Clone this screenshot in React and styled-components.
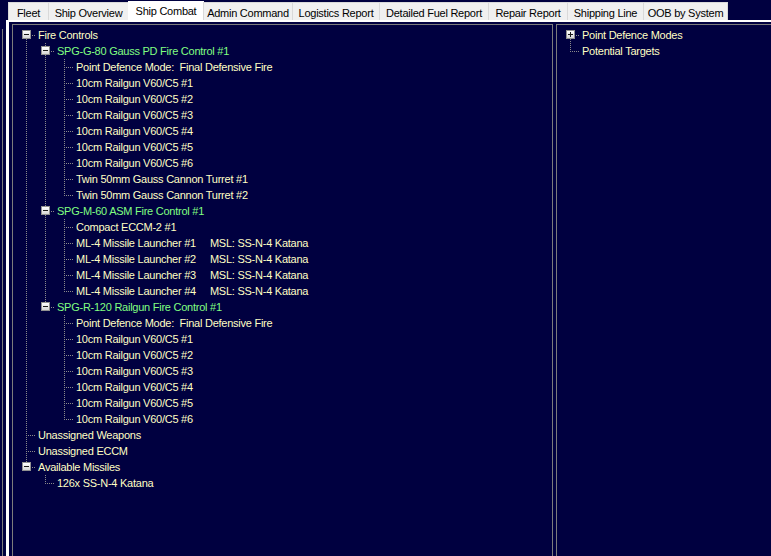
import React from "react";
import styled, { createGlobalStyle } from "styled-components";

const NAVY = "#000040";
const LINE = "#8a8a8a";
const FONT = `"Liberation Sans", Arial, sans-serif`;

const Global = createGlobalStyle`
  html, body {
    margin: 0;
    padding: 0;
    background: ${NAVY};
    overflow: hidden;
  }
  * { box-sizing: border-box; }
`;

const Screen = styled.div`
  display: flex;
  width: 771px;
  height: 566px;
  background: ${NAVY};
  font-family: ${FONT};
  font-size: 11px;
  letter-spacing: -0.25px;
`;

const Gutter = styled.div`
  width: 4px;
  margin-left: 2px;
  margin-top: 29px;
  border-left: 1px solid #7c7c7c;
`;

const Main = styled.div`
  flex: 1;
  display: flex;
  flex-direction: column;
  min-width: 0;
`;

const TabStrip = styled.div`
  display: flex;
  align-items: flex-end;
  height: 20px;
  padding-left: 3px;
`;

const Tab = styled.div`
  flex: none;
  width: ${(p) => p.$w}px;
  height: ${(p) => (p.$active ? 19 : 18)}px;
  padding-top: ${(p) => (p.$active ? 2 : 3)}px;
  line-height: 14px;
  text-align: center;
  white-space: nowrap;
  color: #000;
  background: ${(p) => (p.$active ? "#ffffff" : "#f0f0f0")};
  border: 1px solid ${(p) => (p.$active ? "#ffffff" : "#d9d9d9")};
  border-bottom: none;
  margin-left: -1px;
`;

const TabPage = styled.div`
  flex: 1;
  display: flex;
  gap: 3px;
  padding: 2px 0 0 3px;
  border-top: 2px solid #ffffff;
  border-left: 3px solid #ffffff;
  background: ${NAVY};
  min-height: 0;
`;

const Panel = styled.div`
  flex: ${(p) => (p.$w ? "none" : "1")};
  width: ${(p) => (p.$w ? `${p.$w}px` : "auto")};
  margin-right: ${(p) => (p.$w ? 0 : -10)}px;
  border: 1px solid #7c7c7c;
  padding: 2px 0 0 4px;
  overflow: hidden;
`;

const Row = styled.div`
  display: flex;
  align-items: flex-start;
  height: 16px;
`;

const dotsV = `repeating-linear-gradient(to bottom, ${LINE} 0 1px, transparent 1px 2px)`;
const dotsH = `repeating-linear-gradient(to right, ${LINE} 0 1px, transparent 1px 2px)`;

const Guide = styled.div`
  flex: none;
  width: 19px;
  height: 16px;
  background: ${(p) => (p.$line ? `${dotsV} 9px 0 / 1px 16px no-repeat` : "none")};
`;

const vSeg = {
  full: `, ${dotsV} 9px 0 / 1px 16px no-repeat`,
  top: `, ${dotsV} 9px 0 / 1px 8px no-repeat`,
  bottom: `, ${dotsV} 9px 8px / 1px 8px no-repeat`,
  none: "",
};

const Connector = styled.div`
  flex: none;
  width: 19px;
  height: 16px;
  padding: 3px 0 0 5px;
  background: ${dotsH} 9px 8px / 10px 1px no-repeat ${(p) => vSeg[p.$v]};
`;

const Expander = styled.div`
  width: 9px;
  height: 9px;
  border: 1px solid #919191;
  background: ${(p) =>
      p.$open
        ? ""
        : "linear-gradient(#1a1a1a, #1a1a1a) center / 1px 5px no-repeat, "}
    linear-gradient(#1a1a1a, #1a1a1a) center / 5px 1px no-repeat,
    linear-gradient(#ffffff, #d6d6d6);
`;

const Label = styled.div`
  padding-left: 2px;
  line-height: 16px;
  white-space: pre;
  color: ${(p) => (p.$green ? "#80ff80" : "#ffffc4")};
`;

const Extra = styled.span`
  margin-left: 14px;
`;

const tabs = [
  ["Fleet", 41],
  ["Ship Overview", 81],
  ["Ship Combat", 76, true],
  ["Admin Command", 90],
  ["Logistics Report", 88],
  ["Detailed Fuel Report", 110],
  ["Repair Report", 80],
  ["Shipping Line", 77],
  ["OOB by System", 85],
];

const railguns = [1, 2, 3, 4, 5, 6].map((n) => ({ text: `10cm Railgun V60/C5 #${n}` }));
const pdMode = { text: "Point Defence Mode:  Final Defensive Fire" };
const launchers = [1, 2, 3, 4].map((n) => ({
  text: `ML-4 Missile Launcher #${n}`,
  extra: "MSL: SS-N-4 Katana",
}));

const leftTree = [
  {
    text: "Fire Controls",
    open: true,
    children: [
      {
        text: "SPG-G-80 Gauss PD Fire Control #1",
        green: true,
        open: true,
        children: [
          pdMode,
          ...railguns,
          { text: "Twin 50mm Gauss Cannon Turret #1" },
          { text: "Twin 50mm Gauss Cannon Turret #2" },
        ],
      },
      {
        text: "SPG-M-60 ASM Fire Control #1",
        green: true,
        open: true,
        children: [{ text: "Compact ECCM-2 #1" }, ...launchers],
      },
      {
        text: "SPG-R-120 Railgun Fire Control #1",
        green: true,
        open: true,
        children: [pdMode, ...railguns],
      },
    ],
  },
  { text: "Unassigned Weapons" },
  { text: "Unassigned ECCM" },
  {
    text: "Available Missiles",
    open: true,
    children: [{ text: "126x SS-N-4 Katana" }],
  },
];

const rightTree = [
  { text: "Point Defence Modes", open: false, children: [{ text: "x" }] },
  { text: "Potential Targets" },
];

function flatten(nodes, depth = 0, guides = [], out = []) {
  nodes.forEach((node, i) => {
    const hasNext = i < nodes.length - 1;
    let seg;
    if (depth === 0 && i === 0) seg = hasNext ? "bottom" : "none";
    else seg = hasNext ? "full" : "top";
    out.push({ node, guides, seg, key: `${depth}-${out.length}` });
    if (node.children && node.open) {
      flatten(node.children, depth + 1, [...guides, hasNext], out);
    }
  });
  return out;
}

function Tree({ nodes }) {
  return flatten(nodes).map(({ node, guides, seg, key }) => (
    <Row key={key}>
      {guides.map((g, i) => (
        <Guide key={i} $line={g} />
      ))}
      <Connector $v={seg}>
        {node.children && <Expander $open={node.open} />}
      </Connector>
      <Label $green={node.green}>
        {node.text}
        {node.extra && <Extra>{node.extra}</Extra>}
      </Label>
    </Row>
  ));
}

export default function App() {
  return (
    <>
      <Global />
      <Screen>
        <Gutter />
        <Main>
          <TabStrip>
            {tabs.map(([label, w, active]) => (
              <Tab key={label} $w={w} $active={active}>
                {label}
              </Tab>
            ))}
          </TabStrip>
          <TabPage>
            <Panel $w={541}>
              <Tree nodes={leftTree} />
            </Panel>
            <Panel>
              <Tree nodes={rightTree} />
            </Panel>
          </TabPage>
        </Main>
      </Screen>
    </>
  );
}
